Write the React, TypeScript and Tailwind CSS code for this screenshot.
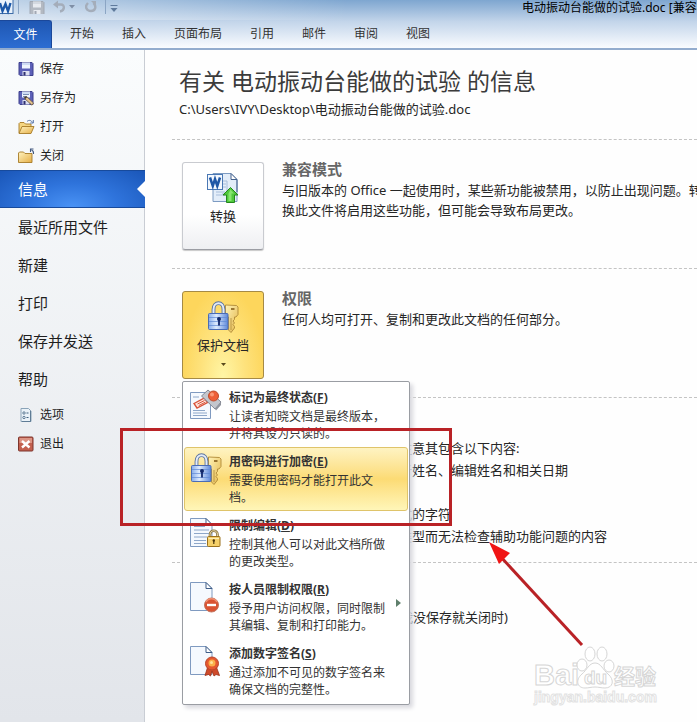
import type { ReactNode } from 'react';
import clsx from 'clsx';

const TABS = ['开始', '插入', '页面布局', '引用', '邮件', '审阅', '视图'];
const PAGES = ['最近所用文件', '新建', '打印', '保存并发送', '帮助'];

function WordIcon() {
  return (
    <svg width="14" height="16" viewBox="0 0 14 16">
      <rect x="-3" y="-2" width="16" height="15.500" fill="#eaf2fb" stroke="#3f6da8" />
      <path d="M0 3 L2.500 11 L5.500 4 L8 11 L10.500 3" fill="none" stroke="#1c58a8" strokeWidth="2.400" />
    </svg>
  );
}

function FloppyIcon({ gray = false, pen = false }: { gray?: boolean; pen?: boolean }) {
  return (
    <svg width="16" height="16" viewBox="0 0 16 16">
      <path d="M1 1.500h13l1 1v12H2l-1-1z" fill={gray ? '#b3b9c2' : '#5c60b8'} stroke={gray ? '#a1a8b3' : '#3d3f8c'} />
      <rect x="4" y="1.500" width="8" height="6" fill={gray ? '#e8ebf0' : '#f0f5fd'} />
      <path d="M4 2h8v2H4z" fill={gray ? '#d4d9e0' : '#cfdcf4'} />
      <rect x="4.500" y="10" width="7" height="4.500" fill={gray ? '#e8ebf0' : '#dcdff0'} />
      <rect x="5.500" y="11" width="2" height="3.500" fill={gray ? '#a1a8b3' : '#2d2f70'} />
      {pen && (
        <>
          <path d="M5 4.500h6M5 6.500h4" stroke="#7b8fb8" />
          <path d="M6.500 7 L8.500 6.500 L15.500 13 L14 15.200 L7 9z" fill="#e3c08c" stroke="#6b5a44" strokeWidth="0.800" />
          <path d="M6.500 7 L8.500 6.500 L9 7.500 L7 9z" fill="#3a3a3a" />
        </>
      )}
    </svg>
  );
}

function FolderIcon({ open = false }: { open?: boolean }) {
  return (
    <svg width="17" height="16" viewBox="0 0 17 16">
      <defs>
        <linearGradient id="folder" x1="0" y1="0" x2="1" y2="1">
          <stop offset="0" stopColor="#fff3c0" />
          <stop offset="1" stopColor="#e5ae45" />
        </linearGradient>
      </defs>
      {open ? (
        <>
          <path d="M1 14V4.500l1-1h4l1.500 1.500H13V8" fill="#f5d682" stroke="#a67a26" strokeWidth="0.900" />
          <path d="M1 14.500 L4 7.500h12L13 14.500z" fill="url(#folder)" stroke="#a67a26" strokeWidth="0.900" />
          <path d="M9 2.500c2-2 4.500-1 5.500 1M15.300 1v3h-3" fill="none" stroke="#5674a8" />
        </>
      ) : (
        <>
          <path d="M0.500 14.500V5l1-1h4l1.500 1.500h7v9z" fill="url(#folder)" stroke="#a67a26" strokeWidth="0.900" />
          <path d="M15.500 6c0.300-2.500-0.500-3.500-2-4M12.500 4V1h3" fill="none" stroke="#43597f" strokeWidth="1.100" />
        </>
      )}
    </svg>
  );
}

function OptionsIcon() {
  return (
    <svg width="16" height="16" viewBox="0 0 16 16">
      <path d="M3 1.500h7.500l2.500 2.500v10.500H3z" fill="#eaf2f8" stroke="#8aa3b8" />
      <path d="M12.500 4v10.500H4" fill="none" stroke="#5f7c95" />
      <circle cx="6" cy="6" r="1.200" fill="none" stroke="#3f617f" strokeWidth="0.800" />
      <circle cx="6" cy="10.500" r="1.200" fill="none" stroke="#3f617f" strokeWidth="0.800" />
      <path d="M8.500 6h2M8.500 10.500h2" stroke="#3f617f" />
    </svg>
  );
}

function ExitIcon() {
  return (
    <svg width="16" height="16" viewBox="0 0 16 16">
      <rect x="0.500" y="1" width="14.500" height="14" rx="1" fill="#c3604f" stroke="#7c352c" />
      <rect x="1.500" y="2" width="12.500" height="5" fill="#dc9484" />
      <path d="M4 5l7.500 6.500M11.500 5L4 11.500" stroke="#fff" strokeWidth="2.400" />
    </svg>
  );
}

function ConvertIcon() {
  return (
    <svg width="32" height="32" viewBox="0 0 32 32">
      <path d="M6 1.500h18l6 6v22H6z" fill="#e3edf9" stroke="#7d9bc2" />
      <path d="M24 1.500v6h6z" fill="#fff" stroke="#44618c" />
      <path d="M30 8v12" stroke="#44618c" />
      <path d="M15 9h5v13h-5M16 12h3M16 15h3M9 20h9M9 23h9" fill="none" stroke="#a7bddb" />
      <rect x="0.500" y="2.500" width="15" height="15" fill="#f3f8fe" stroke="#4a78b4" />
      <path d="M3 5.500 L5.800 14 L8 7 L10.300 14 L13 5.500" fill="none" stroke="#1f57a6" strokeWidth="2.500" />
      <path d="M23.500 15.500 L31 23h-3.500v7.500h-8V23H16z" fill="#4fc83c" stroke="#24871c" />
      <path d="M23.500 17.500 L27 21.500h-2.500v7.500h-3v-7.500" fill="#86e56f" />
    </svg>
  );
}

function LockKeyIcon() {
  return (
    <svg width="32" height="32" viewBox="0 0 32 32">
      <defs>
        <linearGradient id="lock" x1="0" y1="0" x2="1" y2="0">
          <stop offset="0" stopColor="#86aceb" />
          <stop offset="0.400" stopColor="#deebfd" />
          <stop offset="1" stopColor="#5d88da" />
        </linearGradient>
        <linearGradient id="key" x1="0" y1="0" x2="1" y2="1">
          <stop offset="0" stopColor="#fff3b8" />
          <stop offset="1" stopColor="#e2b548" />
        </linearGradient>
      </defs>
      <path d="M18.500 4 L29.500 4.500 L31 6v7.500l-2 2.500h-1.500v2.500l-1.500 1.500 1.500 2-1.500 1.500 1.500 2v1.500L24 31.500 21.500 29V16h-3z" fill="url(#key)" stroke="#b08a38" strokeWidth="0.900" />
      <path d="M24 8h3.500" stroke="#8f6a25" strokeWidth="1.800" />
      <path d="M24 17v12" stroke="#b08a38" strokeWidth="0.800" />
      <path d="M6.500 13V8.500c0-8.500 10-8.500 10 0V13" fill="none" stroke="#5a739f" strokeWidth="3.800" />
      <path d="M6.500 13V8.500c0-8.500 10-8.500 10 0V13" fill="none" stroke="#e3ebf7" strokeWidth="2" />
      <rect x="1.500" y="12.500" width="19.500" height="16" rx="1" fill="url(#lock)" stroke="#4a6cb5" />
      <path d="M2 16.500h18.500M2 20.500h18.500M2 24.500h18.500" stroke="#5f88d4" strokeWidth="0.700" />
      <circle cx="12" cy="18" r="2" fill="#12296b" />
      <path d="M12 18v6.500" stroke="#12296b" strokeWidth="1.800" />
    </svg>
  );
}

function Sheet({ lines = false }: { lines?: boolean }) {
  return (
    <>
      <path d="M0.500 1.500h15.500l6 6v22H0.500z" fill="#f5f9fe" stroke="#7f9ac0" />
      <path d="M16 1.500v6h6z" fill="#fff" stroke="#3f5d88" />
      {lines && <path d="M4 9.500h11M4 13h15M4 16.500h15M4 20h13M4 23.500h12M4 26.500h12" stroke="#8ea7c9" />}
    </>
  );
}

function FinalIcon() {
  return (
    <svg width="32" height="32" viewBox="0 0 32 32">
      <path d="M0.500 3.500h20v26h-20z" fill="#f5f9fe" stroke="#7f9ac0" />
      <path d="M3 21.500h12M3 24h14M3 26.500h14M3 8h6" stroke="#8ea7c9" />
      <path d="M4 14.500 L14.500 9 L17.500 13.500 L7 19z" fill="#fde6df" stroke="#d9533a" strokeWidth="1.400" />
      <path d="M7.500 15l7-3.500M8.800 16.500l6.500-3.300" stroke="#d9533a" />
      <path d="M11.500 7 L18 1 L31 13 L25 20z" fill="#c3c6cd" stroke="#858995" />
      <path d="M25 20l6-7v3l-5 5.500z" fill="#8f939d" />
      <circle cx="23.500" cy="7" r="5" fill="#ee6038" stroke="#bd4a2b" />
      <circle cx="22" cy="5.500" r="2" fill="#fa9a78" />
    </svg>
  );
}

function RestrictIcon() {
  return (
    <svg width="32" height="32" viewBox="0 0 32 32">
      <Sheet lines />
      <path d="M20 20v-2.500c0-5 7.500-5 7.500 0V20" fill="none" stroke="#8a7442" strokeWidth="2.600" />
      <path d="M20 20v-2.500c0-5 7.500-5 7.500 0V20" fill="none" stroke="#eadba8" strokeWidth="1" />
      <rect x="17.500" y="19.500" width="12.500" height="10" rx="1" fill="#f5d069" stroke="#9a701c" />
      <path d="M18.500 21.500h10.500" stroke="#fdeeb5" />
      <circle cx="23.800" cy="23.500" r="1.200" fill="#4a350c" />
      <path d="M23.800 24v3" stroke="#4a350c" strokeWidth="1.200" />
    </svg>
  );
}

function PeopleIcon() {
  return (
    <svg width="32" height="32" viewBox="0 0 32 32">
      <Sheet />
      <circle cx="21.500" cy="24" r="7" fill="#da5433" stroke="#c2745f" />
      <path d="M16 21c2-4.500 9-4.500 11 0" fill="none" stroke="#ee8f72" strokeWidth="1.500" />
      <rect x="17" y="22.800" width="9" height="2.400" fill="#fff" />
    </svg>
  );
}

function SignatureIcon() {
  return (
    <svg width="32" height="32" viewBox="0 0 32 32">
      <Sheet />
      <path d="M18 21 L15 30.500l3.500-1 2 1.500 1.500-5 2 5 2-1.500 3.500 1L26 21z" fill="#cf4b2b" stroke="#9c2f15" strokeWidth="0.800" />
      <circle cx="22" cy="18.500" r="6.500" fill="#e5582f" stroke="#b8452a" />
      <circle cx="22" cy="18" r="3.500" fill="#fbb04a" />
      <circle cx="21.500" cy="17.500" r="1.500" fill="#ffe29b" />
    </svg>
  );
}

function QuickAccess() {
  return (
    <div className="flex h-full items-start gap-1">
      <WordIcon />
      <span className="h-[14px] w-px bg-[#8ba5c4]" />
      <button aria-label="保存" className="ml-[6px] h-[14px] w-4 overflow-hidden">
        <FloppyIcon gray />
      </button>
      <button aria-label="撤消" className="ml-1">
        <svg width="22" height="14" viewBox="0 0 22 14">
          <path d="M4 4.500h4c4 0 4 6 -1 7" fill="none" stroke="#a4adba" strokeWidth="2.400" />
          <path d="M0 4.500l5-4v8z" fill="#a4adba" />
          <path d="M16 5h6l-3 3.500z" fill="#7f8fa6" />
        </svg>
      </button>
      <button aria-label="重复" className="ml-[6px]">
        <svg width="12" height="14" viewBox="0 0 12 14">
          <path d="M3 3c-4 4-1 8 3 8s6-4 2.500-8" fill="none" stroke="#a4adba" strokeWidth="2.400" />
          <path d="M6 1h5v5z" fill="#a4adba" />
        </svg>
      </button>
      <span className="ml-1 h-[14px] w-px bg-[#8ba5c4]" />
      <button aria-label="自定义快速访问工具栏">
        <svg width="8" height="12" viewBox="0 0 8 12">
          <path d="M0.500 5.500h7" stroke="#5f7a9c" />
          <path d="M0.500 8h7L4 12z" fill="#5f7a9c" />
        </svg>
      </button>
    </div>
  );
}

function SmallItem({ icon, children }: { icon: ReactNode; children: ReactNode }) {
  return (
    <button className="flex h-[29px] w-full items-center gap-[5px] pl-[18px] text-left text-[12px]">
      <span className="w-[17px]">{icon}</span>
      {children}
    </button>
  );
}

function Sidebar() {
  return (
    <nav className="w-[145px] shrink-0 border-r border-[#c9cdd4] bg-linear-to-b from-[#fafcfd] to-[#e2e5ea] pt-1">
      <SmallItem icon={<FloppyIcon />}>保存</SmallItem>
      <SmallItem icon={<FloppyIcon pen />}>另存为</SmallItem>
      <SmallItem icon={<FolderIcon open />}>打开</SmallItem>
      <SmallItem icon={<FolderIcon />}>关闭</SmallItem>
      <button className="flex h-[38px] w-[145px] items-center justify-between border-y border-[#174a9c] bg-[#1f5dc0] bg-[radial-gradient(ellipse_at_50%_100%,#4a93f5_0%,#2f74dc_45%,#1a56b8_100%)] pl-[18px] text-[15px] text-white">
        信息
        <svg width="8" height="16" viewBox="0 0 8 16">
          <path d="M8 0v16L0 8z" fill="#fff" />
        </svg>
      </button>
      {PAGES.map((page) => (
        <button key={page} className="flex h-[38px] w-full items-center pl-[18px] text-left text-[15px]">
          {page}
        </button>
      ))}
      <div className="pt-[2px]">
        <SmallItem icon={<OptionsIcon />}>选项</SmallItem>
        <SmallItem icon={<ExitIcon />}>退出</SmallItem>
      </div>
    </nav>
  );
}

function BigButton({ icon, label, active = false }: { icon: ReactNode; label: string; active?: boolean }) {
  return (
    <button
      className={clsx(
        'flex h-[88px] w-[82px] flex-col items-center rounded-[3px] border pt-[9px] text-[13px]',
        active
          ? 'border-[#a58a45] bg-[#fdd862] bg-[radial-gradient(ellipse_at_50%_100%,#fff6a6_0%,#fee27c_40%,#fdd65c_75%)]'
          : 'border-[#c9cbd0] border-b-[#9b9da3] bg-linear-to-b from-white from-60% to-[#eeeff2] shadow-[0_1px_1px_#c8c8c8]'
      )}
    >
      <span className="h-8">{icon}</span>
      <span className="mt-[2px] leading-5">{label}</span>
      {active && (
        <svg className="mt-2" width="5" height="3" viewBox="0 0 5 3">
          <path d="M0 0h5L2.500 3z" fill="#5a4a1c" />
        </svg>
      )}
    </button>
  );
}

function Section({ button, title, children }: { button?: ReactNode; title?: string; children: ReactNode }) {
  return (
    <section className="flex min-h-[129px] gap-[18px] border-t border-dashed border-[#c4c4c4] pt-[19px] pl-[10px]">
      <div className="relative mt-[3px] w-[82px] shrink-0">{button}</div>
      <div className="whitespace-nowrap">
        <div className="h-5">{title && <h2 className="text-[15px] leading-5 font-bold text-[#666]">{title}</h2>}</div>
        <div className="mt-px text-[13px] leading-5">{children}</div>
      </div>
    </section>
  );
}

const MENU = [
  { icon: <FinalIcon />, title: '标记为最终状态', letter: 'F', text: '让读者知晓文档是最终版本，并将其设为只读的。' },
  { icon: <LockKeyIcon />, title: '用密码进行加密', letter: 'E', text: '需要使用密码才能打开此文档。', active: true },
  { icon: <RestrictIcon />, title: '限制编辑', letter: 'D', text: '控制其他人可以对此文档所做的更改类型。' },
  { icon: <PeopleIcon />, title: '按人员限制权限', letter: 'R', text: '授予用户访问权限，同时限制其编辑、复制和打印能力。', submenu: true },
  { icon: <SignatureIcon />, title: '添加数字签名', letter: 'S', text: '通过添加不可见的数字签名来确保文档的完整性。' }
];

function ProtectMenu() {
  return (
    <div role="menu" className="absolute top-[90px] left-0 z-10 w-[228px] rounded-[2px] border border-[#9a9da3] bg-white p-px shadow-[3px_3px_4px_#d8d8de]">
      {MENU.map((item) => (
        <button
          key={item.letter}
          role="menuitem"
          className={clsx(
            'flex h-16 w-full items-start gap-[7px] rounded-[3px] border pt-[5px] pl-[5px] text-left text-[12px] leading-[17px] text-[#333]',
            item.active
              ? 'border-[#dfc46a] bg-linear-to-b from-[#fef3c2] via-[#fcdb74] to-[#fff6b8]'
              : 'border-transparent'
          )}
        >
          <span className="w-8 shrink-0">{item.icon}</span>
          <span className="w-[160px] shrink-0">
            <span className="block font-bold">
              {item.title}(<u>{item.letter}</u>)
            </span>
            <span className="mt-[2px] block">{item.text}</span>
          </span>
          {item.submenu && (
            <svg className="mt-[18px]" width="5" height="8" viewBox="0 0 5 8">
              <path d="M0 0l5 4-5 4z" fill="#5f7f6c" />
            </svg>
          )}
        </button>
      ))}
    </div>
  );
}

function InfoPage() {
  return (
    <main className="min-w-0 flex-1 overflow-hidden bg-[#fefefe] pt-[15px] pl-[27px] text-[#262626]">
      <header className="pb-5 pl-[7px] whitespace-nowrap">
        <h1 className="text-[23px] leading-8 text-[#3b3b3b]">有关 电动振动台能做的试验 的信息</h1>
        <p className="mt-[2px] text-[13px] leading-5">C:\Users\IVY\Desktop\电动振动台能做的试验.doc</p>
      </header>

      <Section title="兼容模式" button={<BigButton icon={<ConvertIcon />} label="转换" />}>
        与旧版本的 Office 一起使用时，某些新功能被禁用，以防止出现问题。转
        <br />
        换此文件将启用这些功能，但可能会导致布局更改。
      </Section>

      <Section
        title="权限"
        button={
          <>
            <BigButton icon={<LockKeyIcon />} label="保护文档" active />
            <ProtectMenu />
          </>
        }
      >
        任何人均可打开、复制和更改此文档的任何部分。
      </Section>

      <Section>
        <p>在共享此文件前，请注意其包含以下内容:</p>
        <ul className="mt-px pb-[15px] pl-[39px] leading-[22px]">
          <li>文档属性、作者姓名、编辑姓名和相关日期</li>
          <li className="mt-[22px]">设置为隐藏格式的字符</li>
          <li>由于当前文件类型而无法检查辅助功能问题的内容</li>
        </ul>
      </Section>

      <Section>
        <p className="pt-1">今天 自动保存 版本 (我没保存就关闭时)</p>
      </Section>
    </main>
  );
}

function Watermark() {
  return (
    <svg className="absolute top-[642px] left-[530px] z-30" width="134" height="66" viewBox="0 0 134 66" fontFamily="'Liberation Sans', 'Noto Sans CJK SC', sans-serif">
      <g fill="#fff" stroke="#d6d6d6" strokeWidth="1">
        <text x="4" y="43" fontSize="29" fontWeight="bold">Bai</text>
        <ellipse cx="52" cy="23" rx="5" ry="6" />
        <ellipse cx="60" cy="12" rx="5" ry="7" />
        <ellipse cx="72" cy="12" rx="5" ry="7" />
        <ellipse cx="79" cy="24" rx="5" ry="6" />
        <path d="M65 21c-6 0-8 7-13 11-7 6-5 14 3 14 4 0 6-1 10-1s6 1 10 1c8 0 10-8 3-14-5-4-7-11-13-11z" />
        <text x="54" y="42" fontSize="19" fontWeight="bold">du</text>
        <text x="84" y="42" fontSize="21" fontWeight="bold">经验</text>
      </g>
      <text x="4" y="60" fontSize="14" fontWeight="bold" fill="#fff" stroke="#e2e2e2" strokeWidth="1">jingyan.baidu.com</text>
    </svg>
  );
}

export default function App() {
  return (
    <div className="relative flex min-h-screen flex-col overflow-hidden bg-white font-['Noto_Sans','Noto_Sans_CJK_SC',sans-serif] text-[12px] text-[#1e1e1e]">
      <div className="border-b-2 border-[#93acce] bg-linear-to-b from-[#7ea6d0] via-[#c3d5ea] via-45% to-[#fafcff]">
        <div className="flex h-5 items-start justify-between bg-linear-to-r from-[#ffffff80] to-transparent to-50%">
          <QuickAccess />
          <div className="w-[175px] overflow-hidden leading-4 whitespace-nowrap text-black">电动振动台能做的试验.doc [兼容模式]</div>
        </div>
        <div className="flex h-7 items-stretch">
          <button className="w-[52px] rounded-tr-[3px] border-t border-r border-[#1b489a] bg-linear-to-b from-[#1f57b3] to-[#2c6dd2] text-white">文件</button>
          <div className="flex items-center gap-7 pl-[18px] text-[#333]">
            {TABS.map((tab) => (
              <button key={tab}>{tab}</button>
            ))}
          </div>
        </div>
      </div>

      <div className="flex flex-1">
        <Sidebar />
        <InfoPage />
      </div>

      <div className="pointer-events-none absolute top-[428px] left-[120px] z-20 h-[98px] w-[332px] border-3 border-[#b92226]" />
      <svg className="pointer-events-none absolute top-[540px] left-[486px] z-20" width="100" height="108" viewBox="0 0 100 108">
        <path d="M14 16l82 89" stroke="#b92226" strokeWidth="3" />
        <path d="M3 2l21 11-11 11z" fill="#f01414" />
      </svg>
      <Watermark />
    </div>
  );
}
